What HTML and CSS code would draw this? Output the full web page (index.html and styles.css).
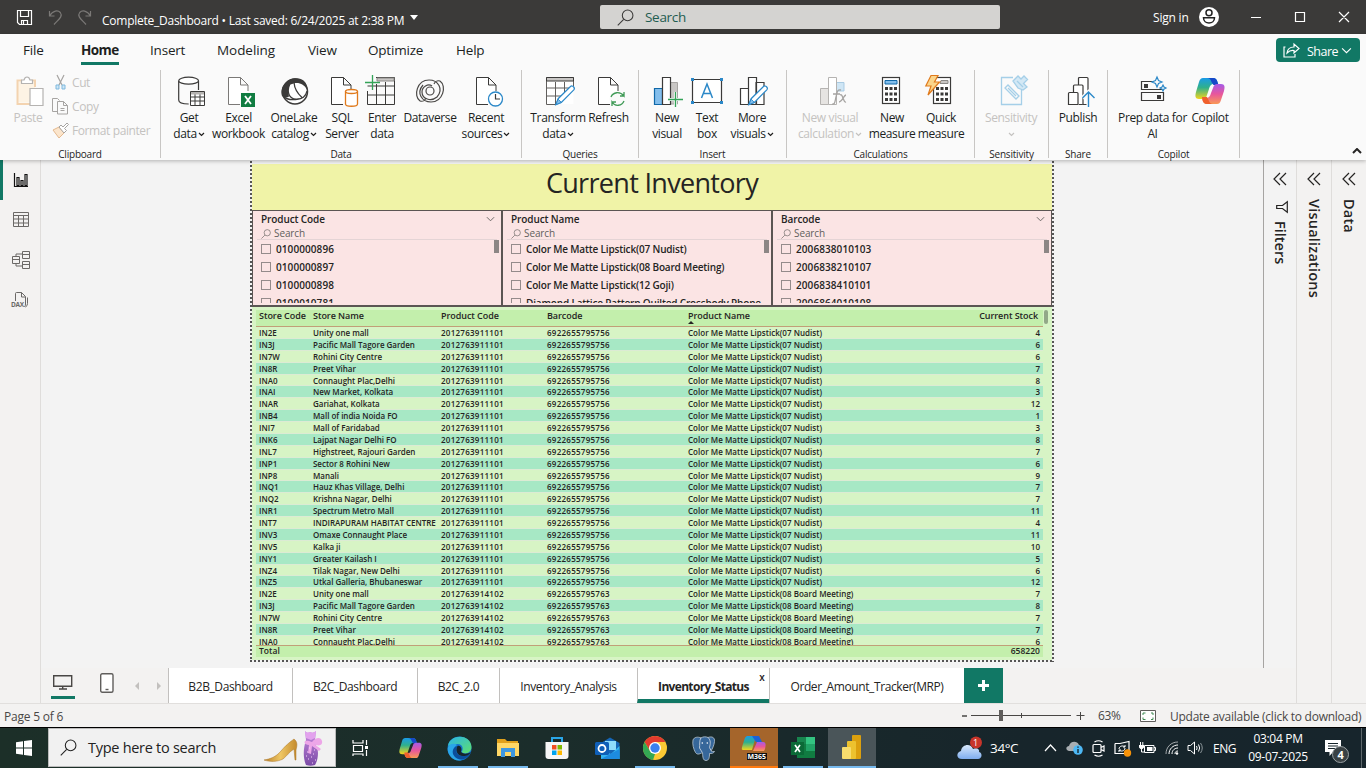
FILE: index.html
```html
<!DOCTYPE html>
<html lang="en">
<head>
<meta charset="utf-8">
<title>Complete_Dashboard</title>
<link rel="stylesheet" href="styles.css">
</head>
<body>
<svg class="defs" width="0" height="0">
  <defs>
    <linearGradient id="cpA" x1="0" y1="0" x2="0" y2="1"><stop offset="0" stop-color="#1a9be8"/><stop offset=".45" stop-color="#2fb08c"/><stop offset="1" stop-color="#f3d51c"/></linearGradient>
    <linearGradient id="cpB" x1="0" y1="0" x2="0" y2="1"><stop offset="0" stop-color="#a55be8"/><stop offset=".5" stop-color="#e8569c"/><stop offset="1" stop-color="#f99a55"/></linearGradient>
    <linearGradient id="edgeA" x1="0" y1="0" x2="1" y2="1"><stop offset="0" stop-color="#2ab4e8"/><stop offset="1" stop-color="#5fe06c"/></linearGradient>
    <linearGradient id="cloud" x1="0" y1="0" x2="0" y2="1"><stop offset="0" stop-color="#d8e8fb"/><stop offset="1" stop-color="#7fadee"/></linearGradient>
    <linearGradient id="shoe" x1="0" y1="0" x2="1" y2="0"><stop offset="0" stop-color="#b9802b"/><stop offset=".5" stop-color="#efc765"/><stop offset="1" stop-color="#c48a2c"/></linearGradient>
    <linearGradient id="dress" x1="0" y1="0" x2="0" y2="1"><stop offset="0" stop-color="#c88be0"/><stop offset="1" stop-color="#7a4ba6"/></linearGradient>
  </defs>
  <symbol id="search" viewBox="0 0 16 16"><circle cx="10" cy="6" r="5" fill="none" stroke="currentColor"/><path d="M6.3 9.7.7 15.3" fill="none" stroke="currentColor"/></symbol>
  <symbol id="chev" viewBox="0 0 10 6"><path d="m1 1 4 4 4-4" fill="none" stroke="currentColor"/></symbol>
  <symbol id="chevb" viewBox="0 0 7 5"><path d="m1 1 2.500 2.500L6 1" fill="none" stroke="currentColor" stroke-width="1.200"/></symbol>
  <symbol id="dbl" viewBox="0 0 14 14"><path d="M7 1 1 7l6 6M13 1 7 7l6 6" fill="none" stroke="currentColor" stroke-width="1.200"/></symbol>
  <symbol id="copilot" viewBox="0 0 30 28"><path d="M8 1h10c3 0 4 2 4.500 4l.5 2h-4c-3 0-4 1.500-5 5l-2 6c-1 3-2 4-4 4H4c-4 0-4-3-3-7L4 5c1-3 2-4 4-4z" fill="url(#cpA)"/><path d="M12 1h6c3 0 4 2 4.500 4l1 3h-5l-2-3c-1-3-2-4-4.500-4z" fill="#1648c8"/><path d="M22 27H12c-3 0-4-2-4.500-4L7 21h4c3 0 4-1.500 5-5l2-5c1-3 2-4 4-4h4c4 0 4 3 3 7l-3 9c-1 3-2 4-4 4z" fill="url(#cpB)"/><path d="M18 27h-6c-3 0-4-2-4.500-4L7 20h5l2 4c.7 2 2 3 4 3z" fill="#f0602c"/></symbol>
  <symbol id="doc" viewBox="0 0 28 32"><path d="M13 28.500H1.500v-27h12l7.500 7.500v6M13.500 1.500V9H21" fill="#fff" stroke="currentColor"/></symbol>
  <symbol id="pencil" viewBox="0 0 24 24"><path d="M2 22l2.500-6.500L18 2.200c2-2 5.500 1.500 3.600 3.600L8 19.500z" fill="#fff" stroke="#2b88c8" stroke-width="1.300"/><path d="m2 22 2.500-6L8 19.500z" fill="#83beec" stroke="#2b88c8"/></symbol>
  <symbol id="calc" viewBox="0 0 20 30"><rect x="1.500" y="1.500" width="17" height="26" fill="#fff" stroke="#3b3a39" stroke-width="1.200"/><g fill="#3b3a39"><path d="M4 11h3v3H4zM8.500 11h3v3h-3zM13 11h3v3h-3zM4 16.500h3v3H4zM8.500 16.500h3v3h-3zM13 16.500h3v3h-3zM4 22h3v3H4zM8.500 22h3v3h-3zM13 22h3v3h-3z"/></g></symbol>
</svg>

<header class="titlebar">
  <svg class="tb-save" width="17" height="17" viewBox="0 0 17 17"><path d="M1.500 1.500h14v14h-12l-2-2zM4.500 1.500v6h8v-6M5.500 15.500v-4h6v4M7.500 12v3" fill="none" stroke="#fff" stroke-width="1.200"/></svg>
  <svg class="tb-undo" width="15" height="17" viewBox="0 0 15 17"><path d="M1.500 2v5h5M1.500 7C5 1 10 1 12.300 3.500c3 4-2 7-6.300 12" fill="none" stroke="#7b7977" stroke-width="1.200"/></svg>
  <svg class="tb-redo" width="15" height="17" viewBox="0 0 15 17"><path d="M13.500 2v5h-5M13.500 7C10 1 5 1 2.700 3.500c-3 4 2 7 6.300 12" fill="none" stroke="#7b7977" stroke-width="1.200"/></svg>
  <span class="file-title">Complete_Dashboard • Last saved: 6/24/2025 at 2:38 PM</span>
  <span class="tri"></span>
  <div class="top-search"><svg width="17" height="17"><use href="#search"/></svg><span>Search</span></div>
  <span class="signin">Sign in</span>
  <svg class="avatar" width="20" height="20" viewBox="0 0 20 20"><circle cx="10" cy="10" r="10" fill="#fff"/><circle cx="10" cy="5.700" r="3" fill="none" stroke="#222" stroke-width="1.500"/><path d="M4.500 10.700h11c0 7-11 7-11 0z" fill="none" stroke="#222" stroke-width="1.500"/></svg>
  <svg class="winbtns" width="100" height="12" viewBox="0 0 100 12"><path d="M1 6.500h10M45.500 1.500h9v9h-9zM89 1l10 10M99 1 89 11" fill="none" stroke="#fff" stroke-width="1.200"/></svg>
</header>

<section class="ribbon">
  <nav class="menu">
    <span class="m-file">File</span><span class="m-home on">Home</span><span class="m-insert">Insert</span><span class="m-model">Modeling</span><span class="m-view">View</span><span class="m-opt">Optimize</span><span class="m-help">Help</span>
    <button class="share"><svg width="17" height="15" viewBox="0 0 17 15"><path d="M2.500 4H1v10h11v-3M4 10c.5-4 3-6 7-6V1l5 4.500-5 4.500V7.500C8 7 6 8 4 10z" fill="none" stroke="#fff" stroke-width="1.200"/></svg><span>Share</span><svg width="11" height="7"><use href="#chev"/></svg></button>
  </nav>
  <div class="groups">
    <div class="group g-clip">
      <div class="items clip">
        <div class="item w-paste dim"><svg class="ic" width="30" height="32" viewBox="0 0 30 32"><path d="M3 6h17v6h-5v14.500H3z" fill="#fdf3e4"/><path d="M7 4.500H2.500V28H15M20 11V4.500h-4" fill="none" stroke="#f3d3b0" stroke-width="2"/><path d="M6.500 7.500V4H9c1-4 5-4 6 0h2.500v3.500zM15 12.500h13v17H15z" fill="#fff" stroke="#b5b3b1" stroke-width="1.200"/></svg><span>Paste</span></div>
        <div class="mini dim">
          <div><svg width="17" height="17" viewBox="0 0 17 17"><path d="m5 1 5 10M12 1 7 11" stroke="#a6a4a2" stroke-width="1.200"/><path d="M4 11h3v4H4zM10 11h3v4h-3z" fill="#cfe6f5" stroke="#7fb9de"/></svg><span>Cut</span></div>
          <div><svg width="17" height="17" viewBox="0 0 17 17"><path d="M6 13.500H.5v-13h5l2 2M5.500 3.500h6l4 4v8.500h-10zM11.500 3.500v4h4M8.500 10.500h4M8.500 12.500h4" fill="none" stroke="#a6a4a2"/></svg><span>Copy</span></div>
          <div><svg width="17" height="17" viewBox="0 0 17 17"><path d="m1 8 6-3 5 6-5 5z" fill="#fbe5cc" stroke="#e5b98f"/><path d="m7 5 2-2 2 2 4-4 1.500 1.500-4 4 2 2L12 11z" fill="#fff" stroke="#a6a4a2"/></svg><span>Format painter</span></div>
        </div>
      </div>
      <span class="gname">Clipboard</span>
    </div>
    <div class="group g-data">
      <div class="items">
        <div class="item w50"><svg class="ic i-get" width="28" height="32" viewBox="0 0 28 32"><path d="M.7 5v19c0 2.500 4 4 10 4M20.500 5v9" fill="none" stroke="#3b3a39" stroke-width="1.200"/><ellipse cx="10.600" cy="4.700" rx="9.900" ry="3.500" fill="#fff" stroke="#3b3a39" stroke-width="1.200"/><path d="M12.500 15.500h14v14h-14zM12.500 21h14M12.500 25h14M17 18v12M22 18v12" fill="#fff" stroke="#3b3a39"/><path d="M13 16h13v2.500H13z" fill="#b5b3b1"/></svg><span>Get<br>data<svg class="dn"><use href="#chevb"/></svg></span></div>
        <div class="item w49"><svg class="ic gray i-xl" width="28" height="32" viewBox="0 0 28 32"><use href="#doc" width="28" height="32"/><path d="M14 17h14v14H14z" fill="#107c41"/><path d="m18 20 6 8M24 20l-6 8" stroke="#fff" stroke-width="1.800"/></svg><span>Excel<br>workbook</span></div>
        <div class="item w62"><svg class="ic" width="29" height="32" viewBox="0 0 29 32"><circle cx="15" cy="15.500" r="12.500" fill="#fff" stroke="#3b3a39" stroke-width="1.500"/><path d="M6 7C9 2 18 .5 23.500 4.500c3 2.500 4 6 3.500 9C24 7.500 17 5 10.500 8.500 8 11 7.500 15 9 20.500 6.500 22 4 21.500 2 20 .5 15 2 10 6 7z" fill="#3b3a39"/><path d="M9.500 8.500C6.500 16 9 22.500 16 23.200c6 .6 10-3 11-8M14 6.500c.5 6 3.500 11 8 15M3 20c4 4 11 4 15.500 3" fill="none" stroke="#3b3a39" stroke-width="1.300"/></svg><span>OneLake<br>catalog<svg class="dn"><use href="#chevb"/></svg></span></div>
        <div class="item w34"><svg class="ic i-sql" width="28" height="32" viewBox="0 0 28 32"><use href="#doc" width="28" height="32"/><path d="M15.500 16v12c0 3 12 3 12 0V16z" fill="#fff" stroke="#e07a1c" stroke-width="1.300"/><ellipse cx="21.500" cy="15.500" rx="6" ry="2" fill="#fff" stroke="#e07a1c" stroke-width="1.300"/></svg><span>SQL<br>Server</span></div>
        <div class="item w46"><svg class="ic i-enter" width="31" height="32" viewBox="0 0 31 32"><path d="M2.500 15v13.500h27v-27H11M2.500 19h27M2.500 10h27M11.500 8v20M20.500 6v22" fill="none" stroke="#3b3a39"/><path d="M12 2h17v3H12z" fill="#c8c6c4" stroke="#8a8886"/><path d="M0 6.500h15M7.500-1v15" stroke="#33a357" stroke-width="1.300"/></svg><span>Enter<br>data</span></div>
        <div class="item w50"><svg class="ic" width="30" height="32" viewBox="0 0 30 32"><g fill="none" stroke="#4a4846" stroke-width="1.200"><circle cx="15" cy="15" r="4"/><path d="M5 25C-2 20 2 4 14 4c9 0 15 9 8 17-6 5-15 2-15-5 0-5 6-9 10-6M25 5c7 5 3 21-9 21C7 26 1 17 8 9"/><path d="M5 25c4 1 5-1 6-3M25 5c-4-1-5 1-6 3"/></g></svg><span>Dataverse</span></div>
        <div class="item w62"><svg class="ic i-rec" width="28" height="32" viewBox="0 0 28 32"><use href="#doc" width="28" height="32"/><circle cx="20.500" cy="23" r="7" fill="#fff" stroke="#2b88c8" stroke-width="1.300"/><path d="M20.500 18v5H25" fill="none" stroke="#3b3a39" stroke-width="1.200"/></svg><span>Recent<br>sources<svg class="dn"><use href="#chevb"/></svg></span></div>
      </div>
      <span class="gname">Data</span>
    </div>
    <div class="group g-query">
      <div class="items">
        <div class="item w72"><svg class="ic i-trans" width="31" height="32" viewBox="0 0 31 32"><path d="M1.500 1.500h27V28h-27z" fill="#fff"/><path d="M11 28.500H1.500v-27h27V10M1.500 12h25M1.500 20h15M10.500 6v22M19.500 6v11" fill="none" stroke="#605e5c"/><path d="M1.500 1.500h27V5h-27z" fill="#c8c6c4" stroke="#3b3a39"/><use href="#pencil" x="9" y="8" width="22" height="23"/></svg><span>Transform<br>data<svg class="dn"><use href="#chevb"/></svg></span></div>
        <div class="item w29"><svg class="ic i-ref" width="28" height="32" viewBox="0 0 28 32"><use href="#doc" width="28" height="32"/><circle cx="20.500" cy="23" r="8" fill="#fafafa"/><path d="M14 21c2-5 9-6 13-1v-4M27 20h-4M27 25c-2 5-9 6-12 1v4M15 26h4" fill="none" stroke="#3f9a56" stroke-width="1.300"/></svg><span>Refresh</span></div>
      </div>
      <span class="gname">Queries</span>
    </div>
    <div class="group g-insert">
      <div class="items">
        <div class="item w56"><svg class="ic i-new" width="30" height="32" viewBox="0 0 30 32"><path d="M17 6.500h7.500V28H17z" fill="#c8c6c4" stroke="#a6a4a2"/><path d="M1.500 12.500h8v16h-8z" fill="#83beec" stroke="#1068a8" stroke-width="1.200"/><path d="M9.500 1.500h8v27h-8z" fill="#fff" stroke="#3b3a39" stroke-width="1.200"/><path d="M15 23.500h15M22.500 16v15" stroke="#fafafa" stroke-width="3"/><path d="M15 23.500h15M22.500 16v15" stroke="#33a357" stroke-width="1.300"/></svg><span>New<br>visual</span></div>
        <div class="item w24"><svg class="ic" width="32" height="32" viewBox="0 0 32 32"><path d="M1.500 3.500h29v23h-29z" fill="#fff" stroke="#3b3a39" stroke-width="1.200"/><path d="M0 2h3v3H0zM29 2h3v3h-3zM0 25h3v3H0zM29 25h3v3h-3z" fill="#2b88c8"/><path d="M10.500 22 16 8l5.500 14M12 17.500h8" fill="none" stroke="#2b88c8" stroke-width="1.500"/></svg><span>Text<br>box</span></div>
        <div class="item w66"><svg class="ic i-more" width="30" height="32" viewBox="0 0 30 32"><path d="M17 6.500h8V28.500h-8zM1.500 12.500h8v16h-8zM9.500 1.500h8v27h-8z" fill="#fff" stroke="#3b3a39" stroke-width="1.200"/><use href="#pencil" x="8" y="8" width="22" height="23"/></svg><span>More<br>visuals<svg class="dn"><use href="#chevb"/></svg></span></div>
      </div>
      <span class="gname">Insert</span>
    </div>
    <div class="group g-calc">
      <div class="items">
        <div class="item w86 dim"><svg class="ic i-vis" width="28" height="32" viewBox="0 0 28 32"><path d="M17 6.500h8V15h-8z" fill="#cfe6f5" stroke="#a9cbe3"/><path d="M1.500 12.500h8v16h-8z" fill="#e6e4e2" stroke="#b5b3b1"/><path d="M9.500 1.500h8v27h-8z" fill="#fff" stroke="#b5b3b1"/><path d="M22 14c-4-1-4 3-5 7s-1 8-4 7M14 18h7M21 19c3-2 3 8 6 7M27 19c-2 0-4 7-7 7" fill="none" stroke="#a6a4a2" stroke-width="1.300"/></svg><span>New visual<br>calculation<svg class="dn"><use href="#chevb"/></svg></span></div>
        <div class="item w38"><svg class="ic i-meas" width="20" height="32" viewBox="0 0 20 32"><use href="#calc" width="20" height="30"/><path d="M4 4.500h12v3.500H4z" fill="#83beec" stroke="#1068a8"/></svg><span>New<br>measure</span></div>
        <div class="item w60"><svg class="ic i-quick" width="27" height="32" viewBox="0 0 27 32"><use href="#calc" x="7" width="20" height="30"/><path d="M16 4.500h7v3h-8z" fill="#c8c6c4" stroke="#8a8886"/><path d="M6-.5h7L9.500 6h5L3 19l3-9H.8z" fill="#fbd58b" stroke="#e07a1c" stroke-width="1.200"/></svg><span>Quick<br>measure</span></div>
      </div>
      <span class="gname">Calculations</span>
    </div>
    <div class="group g-sens">
      <div class="items">
        <div class="item w72 dim"><svg class="ic i-sens" width="28" height="32" viewBox="0 0 28 32"><g fill="none" stroke="#a5cfe8" stroke-width="1.300"><path d="M13 1.500H1.500v27h20V14"/><path d="m5 12 3-3 11 11-3 3zM8 12l8 8"/></g><g fill="#d3e8f5" stroke="#a5cfe8" stroke-width="1.300"><path d="m13 5 5-5 3 3 3-3 3.500 3.500-4 4 3.500 3.500-4 3-5-2z"/><path d="m17 5 6 6" fill="none"/></g></svg><span>Sensitivity<br><svg class="dn"><use href="#chevb"/></svg></span></div>
      </div>
      <span class="gname">Sensitivity</span>
    </div>
    <div class="group g-share">
      <div class="items">
        <div class="item w58"><svg class="ic i-pub" width="28" height="32" viewBox="0 0 28 32"><g fill="#fff" stroke="#3b3a39" stroke-width="1.200"><path d="M11.500 11V2.500q0-1 1-1H20q1 0 1 1V28.500h-9"/><path d="M6.500 17v-7q0-1 1-1H15q1 0 1 1V28.500"/><path d="M1.500 17.500q0-1 1-1H10q1 0 1 1v11H1.500z"/></g><path d="M21.500 31V16M15.500 22l6-6 6 6" fill="none" stroke="#fafafa" stroke-width="4"/><path d="M21.500 31V16M15.500 22l6-6 6 6" fill="none" stroke="#2b88c8" stroke-width="1.400"/></svg><span>Publish</span></div>
      </div>
      <span class="gname">Share</span>
    </div>
    <div class="group g-cop">
      <div class="items">
        <div class="item w89"><svg class="ic" width="26" height="32" viewBox="0 0 26 32"><path d="M13 5.500H1.500v8h22v-2M1.500 16.500h22v8h-22z" fill="none" stroke="#3b3a39" stroke-width="1.200"/><path d="M4 8h4v4H4zM17 19h4v4h-4z" fill="#3b3a39"/><path d="m17 1 1.500 3.500L22 6l-3.500 1.500L17 11l-1.500-3.500L12 6l3.500-1.500zM23 9l1 2 2 1-2 1-1 2-1-2-2-1 2-1z" fill="#fafafa" stroke="#2b88c8" stroke-width="1.200"/></svg><span>Prep data for<br>AI</span></div>
        <div class="item w26"><svg class="ic" width="30" height="32" viewBox="0 0 30 32"><use href="#copilot" y="1" width="30" height="28"/></svg><span>Copilot</span></div>
      </div>
      <span class="gname">Copilot</span>
    </div>
    <svg class="collapse" width="10" height="6"><use href="#chev"/></svg>
  </div>
</section>

<main class="work">
  <aside class="rail">
    <svg width="16" height="16" viewBox="0 0 16 16"><path d="M1.500 0v13.500H15M4 12.500v-8h2v8zM8 12.500v-5h2v5zM12 12.500v-11h2v11z" fill="none" stroke="#111" stroke-width="1.200"/></svg>
    <svg width="16" height="16" viewBox="0 0 16 16"><path d="M.5.500h15v14H.5zM.5 3.500h15M.5 7h15M.5 11h15M5.500 3.500v11M10.500 3.500v11" fill="none" stroke="#6b6967"/></svg>
    <svg width="18" height="18" viewBox="0 0 18 18"><path d="M.5 5.500h7v7h-7zM10.500.500h7v7h-7zM10.500 10.500h7v7h-7zM.5 8.500h7M10.500 3.500h7M10.500 13.500h7M4 5.500V3h6.500M4 12.500V15h6.500" fill="none" stroke="#6b6967"/></svg>
    <div class="dax"><svg width="16" height="16" viewBox="0 0 16 16"><path d="M3.500 10V1.500q0-1 1-1h5l4 4V12q0 2-1 3M9.500.500v4.500h4M15.500 5.500v6q0 2.500-2 3.500" fill="none" stroke="#6b6967"/></svg><b>DAX</b></div>
  </aside>
  <section class="stage">
    <div class="canvas">
      <div class="page">
        <h1 class="title">Current Inventory</h1>
        <div class="slicers" id="slicers"></div>
        <div class="grid">
          <div class="row head"><span>Store Code</span><span>Store Name</span><span>Product Code</span><span>Barcode</span><span>Product Name<i></i></span><span>Current Stock</span></div>
          <div class="rows" id="rows"></div>
          <div class="row total"><span>Total</span><span></span><span></span><span></span><span></span><span>658220</span></div>
          <div class="thumb"></div>
        </div>
      </div>
      <div class="filters pane"><svg width="14" height="14"><use href="#dbl"/></svg><svg class="funnel" width="12" height="12" viewBox="0 0 12 12"><path d="M11.300.700v10.600L6.500 7.500H.7v-3h5.800z" fill="none" stroke="#252423" stroke-width="1.200"/></svg><span>Filters</span></div>
    </div>
    <div class="tabs">
      <div class="devices">
        <div class="desk"><svg width="20" height="15" viewBox="0 0 20 15"><path d="M.7.700h18v10.600H.7zM9.700 11v3M6 14h8" fill="none" stroke="#494745" stroke-width="1.400"/></svg></div>
        <svg class="phone" width="14" height="20" viewBox="0 0 14 20"><rect x=".7" y=".7" width="12.300" height="18.600" rx="1.500" fill="#fff" stroke="#605e5c" stroke-width="1.400"/><path d="M5.500 16.500h3" stroke="#605e5c" stroke-width="1.400"/></svg>
        <i class="arr l"></i><i class="arr r"></i>
      </div>
      <span class="tab t1">B2B_Dashboard</span><span class="tab t2">B2C_Dashboard</span><span class="tab t3">B2C_2.0</span><span class="tab t4">Inventory_Analysis</span><span class="tab t5 on">Inventory_Status<b class="x">x</b></span><span class="tab t6">Order_Amount_Tracker(MRP)</span><span class="add"><svg width="11" height="11" viewBox="0 0 11 11"><path d="M0 5.500h11M5.500 0v11" stroke="#fff" stroke-width="3"/></svg></span>
    </div>
  </section>
  <div class="pane viz"><svg width="14" height="14"><use href="#dbl"/></svg><span>Visualizations</span></div>
  <div class="pane data"><svg width="14" height="14"><use href="#dbl"/></svg><span>Data</span></div>
</main>

<footer class="status">
  <span class="pg">Page 5 of 6</span>
  <svg class="zoom" width="122" height="12" viewBox="0 0 122 12"><path d="M0 6h5" stroke="#494745" stroke-width="1.500"/><path d="M9 5.500h100M59.500 3v5M118.500 2v8M114.500 5.500h8" stroke="#494745"/><path d="M37 0h4v11h-4z" fill="#605e5c"/></svg>
  <span class="pct">63%</span>
  <svg class="fit" width="17" height="12" viewBox="0 0 17 12"><path d="M.5.500h15v11H.5z" fill="#fff" stroke="#605e5c"/><path d="M3 5V3h2.500M11 3h2v2M13 7.500v2h-2M5.500 9.500H3v-2" fill="none" stroke="#3f8a52"/></svg>
  <span class="upd">Update available (click to download)</span>
</footer>

<footer class="taskbar">
  <div class="start"><svg width="16" height="16" viewBox="0 0 16 16"><path d="M0 2.200 7 1.200V7.500H0zM8 1l8-1v7.500H8zM0 8.500h7v6.300l-7-1zM8 8.500h8V16l-8-1z" fill="#fff"/></svg></div>
  <div class="find"><svg width="17" height="17"><use href="#search"/></svg><span>Type here to search</span>
    <svg class="art" width="60" height="36" viewBox="0 0 60 36"><path d="M1 30c6-1 12-3 17-9 5-6 9-9 13-12 4 3 3 7 2 11v10h-1l-1-11c-5 3-7 7-11 10-6 3-13 3-19 1z" fill="url(#shoe)" stroke="#a87424" stroke-width=".5"/><path d="M42 1q2 3 5 1 3 2 6-1l-1 9c-1 4 3 7 3 13 0 4-1 9-3 12-3 1-6 1-9 0-3-7-3-16 0-25z" fill="url(#dress)"/><path d="M42 1q2 3 5 1 3 2 6-1l-1 7-4 2-5-2z" fill="#e3a2ee"/><path d="M49 12c4-5 9-5 10-1s-3 6-8 3l7 5-2 2-7-5-1 8-3-1 1-8c-6 0-7-7 3-3z" fill="#eda6e8"/><path d="M44 22h1M50 24h1M45 29h1M52 30h1M46 18h1M43 26h1M49 33h1M48 27h1M51 20h1" stroke="#f3d8fb"/></svg>
  </div>
  <div class="apps">
    <div><svg width="17" height="18" viewBox="0 0 17 18"><path d="M1 1v3h10V1M1.500 6.500h9v6h-9zM1 17v-2h10v2M14.500 1v5M14.500 11v6" fill="none" stroke="#fff" stroke-width="1.200"/><path d="M13 7h3v3h-3z" fill="#fff"/></svg></div>
    <div class="cop"><svg width="23" height="22"><use href="#copilot"/></svg></div>
    <div class="run"><svg width="25" height="25" viewBox="0 0 25 25"><circle cx="12.500" cy="12.500" r="12" fill="#1474cc"/><path d="M1 10C2-2 24-3 24.500 11c0 6-7 8-10 5 2-2 2-8-4-8-4 0-8 1-9.500 2z" fill="url(#edgeA)"/><path d="M10 9c-6 3-5 14 5 15-8 3-16-6-14-13 2-4 7-4 9-2z" fill="#2aa6e8"/><path d="M10.500 10c-3 4-1 10 5 10 3 0 6-1 8-3-3 7-13 9-17 2-2-4 0-8 4-9z" fill="#0b4f9c"/><path d="M10.500 10c3-1 5 3 3.500 5.500 1 2.500 6 3 10 .5-2 4-6 4-8 4-6 0-8-6-5.500-10z" fill="#17252b"/></svg></div>
    <div class="run"><svg width="22" height="20" viewBox="0 0 22 20"><path d="M0 1h8l2 2h11v5H0z" fill="#e0a01c"/><path d="M0 5h22v13H0z" fill="#ffd766"/><path d="M4 19v-9h14v9h-4v-5H8v5z" fill="#3e97e0"/></svg></div>
    <div><svg width="24" height="24" viewBox="0 0 24 24"><path d="M7 6V2h10v4" fill="none" stroke="#2aa6e8" stroke-width="2"/><path d="M.5 6h23v14q0 3-3 3h-17q-3 0-3-3z" fill="#f6f6f6"/><path d="M7 9h4.500v4.500H7z" fill="#f25022"/><path d="M12.500 9H17v4.500h-4.500z" fill="#7fba00"/><path d="M7 14.500h4.500V19H7z" fill="#00a4ef"/><path d="M12.500 14.500H17V19h-4.500z" fill="#ffb900"/></svg></div>
    <div class="outl"><svg width="25" height="23" viewBox="0 0 25 23"><path d="M6 6 15 .500 24.500 6v16H6z" fill="#1566b7"/><path d="M10 4h11v9H10z" fill="#8edcfb"/><path d="m6 13 10 4 8.500-8v13H6z" fill="#35b5f1"/><path d="m6 22 18.500-10v10z" fill="#1d8be0"/><rect y="5" width="14" height="13" rx="1.500" fill="#0f5fb8"/><circle cx="7" cy="11.500" r="3.500" fill="none" stroke="#fff" stroke-width="1.800"/></svg></div>
    <div class="run"><svg width="24" height="24" viewBox="0 0 24 24"><circle cx="12" cy="12" r="12" fill="#fcc934"/><path d="M1.600 6A12 12 0 0 1 22.400 6H12v6l-5 3z" fill="#e23b2e"/><path d="M1.600 6 7 15l5 3-2 6A12 12 0 0 1 1.600 6z" fill="#34a853"/><circle cx="12" cy="12" r="6" fill="#fff"/><circle cx="12" cy="12" r="4.700" fill="#3b80ee"/></svg></div>
    <div><svg width="24" height="25" viewBox="0 0 24 25"><path d="M1 4c1-3 5-3.500 8-2 2-1.500 5-1.500 7-.5 4-1.500 7 0 6.500 4-.5 4-2 7-3.500 9.500 1 .5 2 .5 3.500.5-1 2-3 2-5 2 0 4-.5 7-3.500 7-3 0-3.200-3-3.500-8-2 1-5 3-7 0C1.500 13 .2 8 1 4z" fill="#36679a" stroke="#b9c6d2" stroke-width=".8"/><path d="M9 1.500C7 5 8 9 7.500 12l2.500 4M16 1.500c3 3 2.500 6 1.500 10l1.500 3" fill="none" stroke="#d3dce5" stroke-width=".8"/><circle cx="10.300" cy="7" r=".8" fill="#fff"/><circle cx="15.300" cy="7" r=".8" fill="#fff"/></svg></div>
    <div class="m365"><svg width="26" height="24" viewBox="0 0 26 24"><path d="M7 1h8l-4 14H2c-2 0-1-3 0-6 2-6 2-8 5-8z" fill="url(#cpA)"/><path d="M11 1h7l3 6h-6z" fill="#1a62d8"/><path d="M16 7h6c3 0 3 3 2 7l-1 2H12z" fill="url(#cpB)"/></svg><b>M365</b></div>
    <div class="run"><svg width="24" height="22" viewBox="0 0 24 22"><path d="M6 0h18v21H6z" fill="#21a366"/><path d="M6 0h9v7H6z" fill="#18854e"/><path d="M15 0h9v7h-9z" fill="#33c481"/><path d="M6 7h18v14H6z" fill="#107c41"/><path d="M15 7h9v7h-9z" fill="#21a366"/><path d="M0 5h13v13H0z" fill="#0b6a37"/><path d="m4 8 5 7M9 8l-5 7" stroke="#fff" stroke-width="1.700"/></svg></div>
    <div class="pbi"><svg width="20" height="24" viewBox="0 0 20 24"><rect x="10" width="9" height="24" rx="1" fill="#dca00e"/><rect x="5" y="6" width="9" height="18" rx="1" fill="#edc22e"/><rect y="12" width="9" height="12" rx="1" fill="#f7dc6d"/></svg></div>
  </div>
  <div class="weather"><svg width="26" height="24" viewBox="0 0 26 24"><path d="M5 23c-6 0-6-7-1-8 1-7 10-8 12-2 4-2 7 1 6 3 4 1 3 7-1 7z" fill="url(#cloud)"/><circle cx="19" cy="6.500" r="6" fill="#c8352b"/></svg><b>1</b></div>
  <span class="temp">34°C</span>
  <div class="tray">
    <div><svg width="13" height="8" viewBox="0 0 13 8"><path d="m1 7 5.500-6L12 7" fill="none" stroke="#fff" stroke-width="1.200"/></svg></div>
    <div><svg width="17" height="14" viewBox="0 0 17 14"><path d="M3 10c-4-1-3-5 0-5 1-5 8-6 10-1 3 1 3 5 0 6z" fill="#a9aeb2"/><circle cx="12" cy="9" r="4.800" fill="#4db8f5"/><path d="M12 8v4M12 5.500v1.300" stroke="#17252b" stroke-width="1.400"/></svg></div>
    <div><svg width="13" height="17" viewBox="0 0 13 17"><path d="M2.500 2q4-2.500 8 0M2.500 15q4 2.500 8 0M1 5.500q0-1 1-1h6q1 0 1 1v6q0 1-1 1H2q-1 0-1-1zM9 7.500l3-1.500v5l-3-1.500" fill="none" stroke="#fff" stroke-width="1.200"/></svg></div>
    <div><svg width="18" height="17" viewBox="0 0 18 17"><path d="M1 3.500h5l9-2v10M1 3.500v10h9" fill="none" stroke="#fff" stroke-width="1.200"/><path d="M5 9c0-3 4-4 6-2V5M11 7H9M11 8c0 3-4 4-6 2v2M5 10h2" fill="none" stroke="#fff"/><circle cx="13.500" cy="13" r="3.700" fill="#f7930a"/></svg></div>
    <div><svg width="17" height="12" viewBox="0 0 17 12"><path d="M5.500 3.500h9.500v7H5.500zM15 5.500h1.500v3H15" fill="none" stroke="#fff"/><path d="M8 5h5.500v4H8zM0 3h5v2.500L3.500 7h-2L0 5.500z" fill="#fff"/><path d="M1.500 0v3M3.800 0v3M2.500 7v3h3" stroke="#fff" fill="none"/></svg></div>
    <div><svg width="14" height="14" viewBox="0 0 14 14"><g fill="none" stroke="#fff"><path d="M1 13C1 6 6 1 13 1" opacity=".6"/><path d="M4 13c0-5 4-9 9-9M7 13c0-4 3-6 6-6M10 13c0-2 1-3 3-3"/></g><circle cx="12" cy="12.500" r="1.200" fill="#fff"/></svg></div>
    <div><svg width="17" height="14" viewBox="0 0 17 14"><path d="M1 4.500h2.500l4-3.500v12l-4-3.500H1zM9.500 5q1.200 2 0 4M11.500 3.500q2.300 3.500 0 7" fill="none" stroke="#fff"/><path d="M13.500 2q3.500 5 0 10" fill="none" stroke="#8b9599"/></svg></div>
  </div>
  <span class="eng">ENG</span>
  <div class="clock"><span>03:04 PM</span><span>09-07-2025</span></div>
  <div class="notif"><svg width="17" height="16" viewBox="0 0 17 16"><path d="M0 0h16v12H8l-3.500 4v-4H0z" fill="#fff"/><path d="M3 3.500h10M3 6h10M3 8.500h7" stroke="#17252b"/></svg><b>4</b></div>
</footer>
<script src="app.js"></script>
</body>
</html>
```

FILE: styles.css
```css
* { box-sizing: border-box; }
body { margin: 0; width: 1366px; height: 768px; overflow: hidden; font-family: "Open Sans", "Noto Sans", sans-serif; font-size: 12px; color: #252423; background: #f3f3f3; display: flex; flex-direction: column; }
svg { display: block; flex: none; overflow: visible; }
.defs { position: absolute; }
span { white-space: nowrap; }

/* title bar */
.titlebar { height: 34px; flex: none; background: #3b3a39; color: #fff; display: flex; align-items: center; }
.tb-save { margin-left: 16px; }
.tb-undo { margin-left: 15px; }
.tb-redo { margin-left: 14px; }
.file-title { margin: 6px 0 0 10px; width: 304px; font-size: 12px; letter-spacing: -.25px; }
.tri { margin-left: 4px; border: 4.5px solid transparent; border-top: 5px solid #fff; border-bottom: 0; }
.top-search { margin-left: 182px; width: 400px; height: 24px; background: #d4d3d1; border-radius: 2px; display: flex; align-items: center; padding-left: 17px; color: #3b3a39; }
.top-search span { margin-left: 11px; color: #1f5c50; font-size: 13.5px; letter-spacing: -.3px; }
.signin { margin-left: 153px; width: 46px; letter-spacing: -.2px; padding-top: 1px; }
.winbtns { margin-left: 31px; }

/* ribbon */
.ribbon { height: 126px; flex: none; background: #fafafa; box-shadow: 0 1px 4px rgba(0,0,0,.28); position: relative; z-index: 2; }
.menu { height: 36px; display: flex; font-size: 13.5px; line-height: 32px; color: #201f1e; letter-spacing: -.2px; }
.menu > span { flex: none; height: 31px; }
.m-file { margin-left: 23px; width: 58px; }
.m-home { width: 38px; margin-right: 31px; }
.menu .on { font-weight: 700; letter-spacing: -.6px; border-bottom: 3px solid #117865; }
.m-insert { width: 67px; }
.m-model { width: 91px; letter-spacing: -.05px; }
.m-view { width: 60px; }
.m-opt { width: 88px; }
.m-help { width: 60px; }
.share { margin: 4px 6px 0 auto; width: 84px; height: 24px; border: 0; border-radius: 4px; background: #117865; color: #fff; font: 12.5px "Open Sans", sans-serif; display: flex; align-items: center; padding: 0 0 0 7px; letter-spacing: -.5px; }
.share span { margin: 2px 4px 0 7px; width: 30px; }
.groups { display: flex; height: 90px; position: relative; }
.group { height: 88px; border-right: 1px solid #c8c6c4; display: flex; flex-direction: column; }
.g-clip { width: 161px; }
.g-data { width: 361px; }
.g-query { width: 117px; }
.g-insert { width: 148px; }
.g-calc { width: 188px; }
.g-sens { width: 74px; }
.g-share { width: 59px; }
.g-cop { width: 132px; }
.items { display: flex; height: 76px; flex: none; padding-top: 6px; }
.g-data .items { padding-left: 3px; }
.item { display: flex; flex-direction: column; align-items: center; flex: none; color: #201f1e; }
.item > span { text-align: center; line-height: 16px; letter-spacing: -.36px; margin-top: 2px; }
.ic { color: #3b3a39; height: 32px; }
.ic.gray { color: #7b7977; }
.i-get { margin-left: 5px; }
.i-xl { margin-left: 5px; }
.i-sql { margin-left: 4px; }
.i-enter { margin-right: 3px; }
.i-rec, .i-trans, .i-ref { margin-left: 5px; }
.i-new { margin-left: 2px; }
.i-more { margin-left: 4px; }
.i-vis { margin-left: 5px; }
.i-meas { margin-right: 2px; }
.i-quick { margin-right: 6px; }
.i-sens, .i-pub { margin-left: 6px; }
.dn { display: inline-block; width: 7px; height: 5px; margin-left: 1px; vertical-align: 1px; }
.dim, .dim > span { color: #c4c2c0; }
.w-paste { width: 50px; padding-left: 6px; }
.w-paste .ic { margin-left: 4px; }
.w24 { width: 24px; } .w26 { width: 26px; } .w29 { width: 29px; } .w34 { width: 34px; } .w38 { width: 38px; }
.w46 { width: 46px; } .w49 { width: 49px; } .w50 { width: 50px; } .w56 { width: 56px; } .w58 { width: 58px; }
.w60 { width: 60px; } .w62 { width: 62px; } .w66 { width: 66px; } .w72 { width: 72px; } .w86 { width: 86px; } .w89 { width: 89px; }
.mini { display: flex; flex-direction: column; margin: -6px 0 0 2px; }
.mini div { height: 24px; display: flex; align-items: center; gap: 3px; letter-spacing: -.4px; }
.gname { text-align: center; font-size: 10px; line-height: 14px; letter-spacing: -.2px; padding-top: 1px; }
.collapse { position: absolute; right: 4px; top: 78px; transform: scaleY(-1); stroke-width: 2; }

/* workspace */
.work { flex: 1; display: flex; background: #f3f2f1; border-bottom: 1px solid #e1dfdd; }
.rail { width: 41px; border-right: 1px solid #dfdddb; display: flex; flex-direction: column; align-items: center; padding-top: 13px; background: linear-gradient(#117865, #117865) 0 0 / 3px 40px no-repeat; }
.rail > svg:nth-child(n+2) { margin-top: 23px; }
.rail > svg { margin-left: 2px; }
.dax { margin-top: 23px; position: relative; }
.dax b { position: absolute; left: -1px; top: 9px; font-size: 6.5px; line-height: 7px; letter-spacing: -.3px; color: #6b6967; background: #f3f2f1; }
.stage { width: 1255px; display: flex; flex-direction: column; }
.canvas { height: 508px; background: #f3f3f3; display: flex; }
.page { margin-left: 209px; width: 804px; height: 502px; padding: 4px 2px 2px; flex: none; background: repeating-linear-gradient(#555 0 2px, transparent 2px 4px) 0 1px / 2px 100% no-repeat, repeating-linear-gradient(#555 0 2px, transparent 2px 4px) 100% 1px / 2px 100% no-repeat, repeating-linear-gradient(90deg, #555 0 2px, transparent 2px 4px) 0 100% / 100% 2px no-repeat; }
.title { margin: 0; height: 46px; background: #f0f3a7; text-align: center; font-size: 27px; font-weight: 400; line-height: 37px; letter-spacing: -.68px; color: #252423; }
.slicers { display: flex; height: 97px; }
.slicer { width: 250px; height: 97px; background: #fbe4e4; border: 1px solid #5b5553; border-bottom-width: 2px; padding: 0 4px; position: relative; }
.slicer + .slicer { width: 270px; }
.slicer + .slicer + .slicer { width: 280px; }
.s-name { display: flex; justify-content: space-between; align-items: center; height: 17px; padding: 0 2px 1px 4px; font-size: 10px; font-weight: 600; letter-spacing: -.1px; }
.s-name svg { color: #605e5c; }
.s-find { display: flex; align-items: center; height: 12px; padding-left: 4px; gap: 3px; font-size: 10px; letter-spacing: -.1px; color: #605e5c; border-bottom: 1px solid #e4d4d5; line-height: 11px; }
.s-list { height: 63px; overflow: hidden; }
.s-list div { display: flex; align-items: center; height: 18.1px; padding-left: 4px; gap: 5px; font-size: 10px; font-weight: 600; letter-spacing: -.17px; }
.slicer:not(:nth-child(2)) .s-list div { letter-spacing: .08px; }
.s-list i { width: 10px; height: 10px; border: 1px solid #948b8b; flex: none; }
.s-bar { position: absolute; right: 2px; top: 29px; width: 5px; height: 13px; background: #8c8685; }
.grid { height: 353px; background: #d7f4c5; padding: 3px 9px 0 4px; position: relative; }
.row { display: grid; grid-template-columns: 54px 128px 106px 141px 258px 100px; height: 11.89px; line-height: 12.4px; font-size: 8px; font-weight: 600; letter-spacing: .03px; color: #252423; border-bottom: 1px solid #dcebd4; }
.row span { padding-left: 3px; }
.row span:last-child { text-align: right; padding: 0 3px 0 0; }
.row.head { height: 17px; background: #c3efac; border-bottom: 1px solid #c19f78; font-size: 9px; line-height: 12px; letter-spacing: -.06px; color: #252423; }
.row.head span:last-child { padding-right: 5px; }
.head i { display: block; border: 3px solid transparent; border-bottom-color: #252423; border-top: 0; width: 0; margin-top: -1px; }
.rows { height: 318px; overflow: hidden; }
.rows .row:nth-child(even) { background: #a7e8c5; }
.rows .row span:nth-child(2) { letter-spacing: -.03px; }
.rows .row span:nth-child(3), .rows .row span:nth-child(4) { letter-spacing: .26px; }
.row.total { height: 12px; background: #c3efac; border-top: 1px solid #c19f78; border-bottom: 0; line-height: 10px; font-size: 8.500px; }
.thumb { position: absolute; right: 4px; top: 3px; width: 4px; height: 14px; border-radius: 2px; background: #92a888; }
.pane { border-left: 1px solid #dfdddb; display: flex; flex-direction: column; align-items: center; padding-top: 12px; font-size: 14.5px; font-weight: 600; }
.pane span { writing-mode: vertical-rl; }
.filters { margin-left: auto; width: 33px; border-left-color: #a6a4a2; }
.funnel { margin: 15px 0 8px 4px; }
.viz { width: 35px; letter-spacing: .2px; }
.data { width: 35px; letter-spacing: .2px; }
.viz span, .data span { margin-top: 13px; }

/* page tabs */
.tabs { display: flex; height: 35px; }
.devices { width: 127px; display: flex; align-items: flex-start; }
.desk { margin-left: 10px; width: 24px; height: 31px; border-bottom: 3px solid #117865; padding: 7px 0 0 2px; }
.phone { margin: 5px 0 0 25px; }
.arr { margin-top: 14px; border: 4px solid transparent; }
.arr.l { margin-left: 17px; border-right-color: #c2c0be; }
.arr.r { margin-left: 18px; border-left-color: #c2c0be; }
.tab { flex: none; background: #fff; border-left: 1px solid #c2c0be; text-align: center; line-height: 38px; letter-spacing: -.4px; position: relative; }
.t1 { width: 124px; } .t2 { width: 125px; } .t3 { width: 82px; } .t4 { width: 138px; } .t5 { width: 132px; } .t6 { width: 195px; }
.tab.on { font-weight: 700; letter-spacing: -.68px; border-bottom: 4px solid #117865; }
.tab .x { position: absolute; right: 5px; top: 2px; font-size: 10px; line-height: 15px; font-weight: 600; }
.add { width: 39px; background: #117865; display: flex; align-items: center; justify-content: center; }

/* status bar */
.status { height: 23px; flex: none; background: #f3f2f1; display: flex; align-items: center; color: #494745; }
.pg { margin-left: 4px; width: 958px; letter-spacing: -.22px; padding-top: 2px; }
.pct { margin-left: 14px; width: 42px; letter-spacing: -.4px; }
.upd { margin-left: 13px; padding-top: 2px; letter-spacing: -.26px; }

/* taskbar */
.taskbar { height: 41px; flex: none; background: linear-gradient(90deg, #1c2f28, #1b2d2b 40%, #17252b 75%, #17252c); border-top: 1px solid #000; color: #fff; display: flex; align-items: center; }
.start { width: 48px; padding-left: 16px; }
.find { width: 288px; height: 39px; align-self: flex-start; background: #f1f1f1; border: 1px solid #bbb; color: #222; display: flex; align-items: center; padding-left: 11px; }
.find span { margin-left: 11px; width: 175px; font-size: 14.5px; letter-spacing: -.28px; }
.apps { display: flex; height: 40px; }
.apps > div { width: 48px; margin-right: 1.2px; display: flex; align-items: center; justify-content: center; position: relative; }
.apps > .cop, .apps > .outl, .apps > .run:nth-child(3) { padding-left: 3px; }
.run { background: linear-gradient(#76b9ed, #76b9ed) 50% 100% / 40px 2px no-repeat; }
.m365 { background: #a5652b; border-bottom: 2px solid #ff7a0f; align-items: flex-start !important; padding-top: 7px; }
.m365 b { position: absolute; left: 17px; top: 25px; background: #111; font-size: 7px; line-height: 7px; padding: 0 1px; }
.pbi { background: #4a5559; border-bottom: 2px solid #76b9ed; }
.weather { margin-left: 80px; position: relative; }
.weather b { position: absolute; left: 16px; top: 1px; font-size: 9px; line-height: 11px; font-weight: 400; }
.temp { margin-left: 7px; width: 48px; font-size: 13.5px; letter-spacing: -.4px; }
.tray { display: flex; width: 170px; }
.tray div { flex: 1; display: flex; align-items: center; justify-content: center; }
.eng { width: 32px; margin-left: 5px; letter-spacing: -.5px; }
.clock { width: 64px; margin-left: 1px; display: flex; flex-direction: column; align-items: center; line-height: 18px; letter-spacing: -.3px; }
.notif { margin-left: 15px; width: 37px; height: 40px; padding-top: 12px; border-right: 1px solid #5d676b; position: relative; }
.notif b { position: absolute; left: 7px; top: 18px; width: 17px; height: 17px; border-radius: 50%; background: #3a4245; border: 1px solid #9aa1a4; font-size: 11px; line-height: 15px; text-align: center; font-weight: 700; }
```

FILE: app.js
```js
const slicers = [
  ['Product Code', true, ['0100000896', '0100000897', '0100000898', '0100010781']],
  ['Product Name', false, ['Color Me Matte Lipstick(07 Nudist)', 'Color Me Matte Lipstick(08 Board Meeting)', 'Color Me Matte Lipstick(12 Goji)', 'Diamond Lattice Pattern Quilted Crossbody Phone']],
  ['Barcode', true, ['2006838010103', '2006838210107', '2006838410101', '2006864010108']]
];
document.getElementById('slicers').innerHTML = slicers.map(([name, open, items]) =>
  `<div class="slicer"><div class="s-name"><span>${name}</span>${open ? '<svg width="9" height="6"><use href="#chev"/></svg>' : ''}</div>
  <div class="s-find"><svg width="10" height="10"><use href="#search"/></svg><span>Search</span></div>
  <div class="s-list">${items.map(t => `<div><i></i><span>${t}</span></div>`).join('')}</div><div class="s-bar"></div></div>`).join('');

const stores = [
  ['IN2E', 'Unity one mall', 4], ['IN3J', 'Pacific Mall Tagore Garden', 6], ['IN7W', 'Rohini City Centre', 6],
  ['IN8R', 'Preet Vihar', 7], ['INA0', 'Connaught Plac,Delhi', 8], ['INAI', 'New Market, Kolkata', 3],
  ['INAR', 'Gariahat, Kolkata', 12], ['INB4', 'Mall of india Noida FO', 1], ['INI7', 'Mall of Faridabad', 3],
  ['INK6', 'Lajpat Nagar Delhi FO', 8], ['INL7', 'Highstreet, Rajouri Garden', 7], ['INP1', 'Sector 8 Rohini New', 6],
  ['INP8', 'Manali', 9], ['INQ1', 'Hauz Khas Village, Delhi', 7], ['INQ2', 'Krishna Nagar, Delhi', 7],
  ['INR1', 'Spectrum Metro Mall', 11], ['INT7', 'INDIRAPURAM HABITAT CENTRE', 4], ['INV3', 'Omaxe Connaught Place', 11],
  ['INV5', 'Kalka ji', 10], ['INY1', 'Greater Kailash I', 5], ['INZ4', 'Tilak Nagar, New Delhi', 6],
  ['INZ5', 'Utkal Galleria, Bhubaneswar', 12]
];
const row = (c, n, p, b, name, q) =>
  `<div class="row"><span>${c}</span><span>${n}</span><span>${p}</span><span>${b}</span><span>${name}</span><span>${q}</span></div>`;
const boardStock = [7, 8, 7, 7, 6];
document.getElementById('rows').innerHTML =
  stores.map(([c, n, q]) => row(c, n, '2012763911101', '6922655795756', 'Color Me Matte Lipstick(07 Nudist)', q)).join('') +
  boardStock.map((q, i) => row(stores[i][0], stores[i][1], '2012763914102', '6922655795763', 'Color Me Matte Lipstick(08 Board Meeting)', q)).join('');
```
